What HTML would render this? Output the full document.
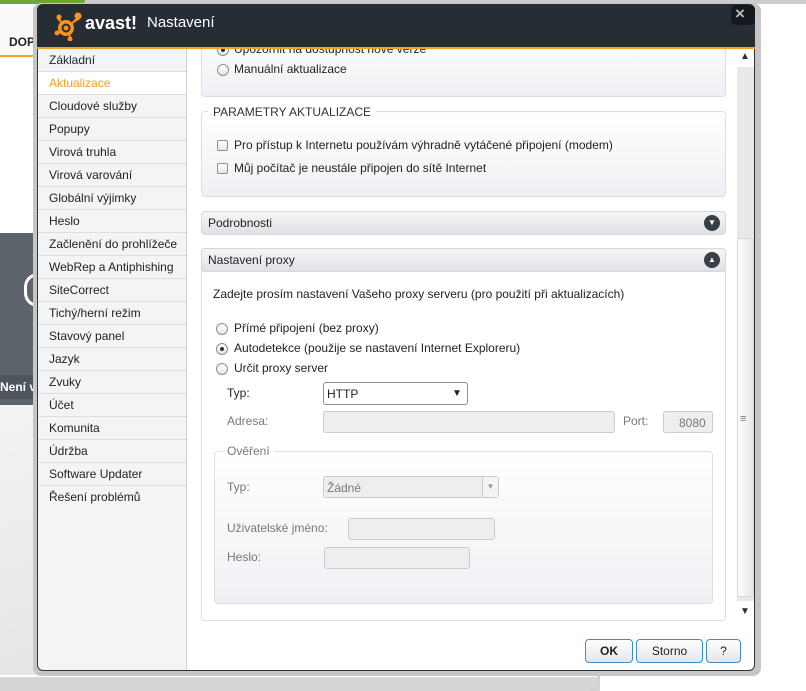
<!DOCTYPE html>
<html><head><meta charset="utf-8">
<style>
*{box-sizing:border-box;margin:0;padding:0}
body{width:806px;height:691px;overflow:hidden;background:#fff;font-family:"Liberation Sans",sans-serif;font-size:12px;color:#222;position:relative}
.abs{position:absolute}
.side div{height:23px;line-height:22px;padding-left:11px;border-bottom:1px solid #dcdee1;font-size:12px;color:#222}
.panel{position:absolute;left:201px;width:525px;border:1px solid #dcdee1;border-radius:4px;background:linear-gradient(#fff,#eef0f3)}
.rad{position:absolute;width:12px;height:12px;border:1px solid #8a8f96;border-radius:50%;background:linear-gradient(#fff,#e4e6e9)}
.rad.on::after{content:"";position:absolute;left:3px;top:3px;width:4px;height:4px;border-radius:50%;background:#333}
.chk{position:absolute;width:11px;height:11px;border:1px solid #8a8f96;border-radius:2px;background:linear-gradient(#fff,#e4e6e9)}
.t{position:absolute;white-space:nowrap;font-size:12px}
.hdr{position:absolute;left:201px;width:525px;height:24px;border-radius:4px;background:linear-gradient(#f5f6f7,#dfe1e4);border:1px solid #d6d8db;line-height:22px;padding-left:6px;font-size:12px}
.hdr .ic{position:absolute;right:5px;top:3px;width:16px;height:16px;border-radius:50%;background:#3a3f45;color:#fff;font-size:8px;line-height:16px;text-align:center}
.inp{position:absolute;height:22px;border:1px solid #c9cbce;border-radius:3px;background:#eeeeee}
.gray{color:#777}
.btn{position:absolute;top:639px;height:24px;border:1px solid #3b8fc4;border-radius:4px;background:linear-gradient(#fff,#e3e6ea);text-align:center;line-height:22px;font-size:12px}
</style></head><body>
<!-- background app -->
<div class="abs" style="left:0;top:0;width:806px;height:4px;background:#ccc"></div>
<div class="abs" style="left:0;top:0;width:85px;height:5px;background:#6fa534;border-radius:0 0 6px 0"></div>
<div class="abs" style="left:0;top:4px;width:40px;height:52px;background:#fafafa"></div>
<div class="t" style="left:9px;top:35px;font-weight:bold;font-size:12px">DOPO</div>
<div class="abs" style="left:0;top:55px;width:40px;height:2px;background:#f7a21b"></div>
<div class="abs" style="left:0;top:233px;width:40px;height:172px;background:#5e646b"></div>
<div class="abs" style="left:24px;top:273px;width:14px;height:34px;border:3px solid #fff;border-right:none;border-radius:17px 0 0 17px"></div>
<div class="abs" style="left:0;top:375px;width:40px;height:24px;background:#4f555c"></div>
<div class="t" style="left:0;top:380px;color:#fff;font-weight:bold">Není v</div>
<div class="abs" style="left:27px;top:438px;width:13px;height:30px;background:#a5a8ac;border-radius:15px 0 0 15px"></div>
<div class="t" style="left:27px;top:483px;color:#9aa">Fi</div>
<div class="abs" style="left:0;top:405px;width:40px;height:270px;background:linear-gradient(160deg,#f2f3f4,#e4e6e8)"></div>
<div class="abs" style="left:0;top:677px;width:600px;height:14px;background:#d4d6d8"></div>
<div class="abs" style="left:590px;top:670px;width:10px;height:21px;border:3px solid #cfd1d3;border-top:none;border-left:none;border-radius:0 0 5px 0"></div>

<!-- dialog frame -->
<div class="abs" style="left:33px;top:3px;width:728px;height:673px;background:#c6c6c6;border-radius:8px"></div>
<div class="abs" style="left:37px;top:4px;width:718px;height:667px;background:#fff;border:1px solid #333;border-radius:6px;overflow:hidden"></div>

<!-- sidebar -->
<div class="abs side" style="left:38px;top:49px;width:149px;height:621px;background:#f3f4f6;border-right:1px solid #d0d2d5;border-radius:0 0 0 6px">
<div>Základní</div><div style="background:#fff;color:#f7a21b">Aktualizace</div><div>Cloudové služby</div><div>Popupy</div><div>Virová truhla</div><div>Virová varování</div><div>Globální výjimky</div><div>Heslo</div><div>Začlenění do prohlížeče</div><div>WebRep a Antiphishing</div><div>SiteCorrect</div><div>Tichý/herní režim</div><div>Stavový panel</div><div>Jazyk</div><div>Zvuky</div><div>Účet</div><div>Komunita</div><div>Údržba</div><div>Software Updater</div><div style="border:none">Řešení problémů</div>
</div>

<!-- content -->
<div class="panel" style="top:30px;height:67px"></div>
<div class="rad on" style="left:217px;top:44px"></div>
<div class="t" style="left:234px;top:42px">Upozornit na dostupnost nové verze</div>
<div class="rad" style="left:217px;top:64px"></div>
<div class="t" style="left:234px;top:62px">Manuální aktualizace</div>

<div class="panel" style="top:111px;height:86px"></div>
<div class="t" style="left:208px;top:105px;background:#fff;padding:0 5px 0 5px;color:#333">PARAMETRY AKTUALIZACE</div>
<div class="chk" style="left:217px;top:140px"></div>
<div class="t" style="left:234px;top:138px">Pro přístup k Internetu používám výhradně vytáčené připojení (modem)</div>
<div class="chk" style="left:217px;top:163px"></div>
<div class="t" style="left:234px;top:161px">Můj počítač je neustále připojen do sítě Internet</div>

<div class="hdr" style="top:211px">Podrobnosti<div class="ic">▼</div></div>

<div class="abs" style="left:201px;top:248px;width:525px;height:373px;border:1px solid #dcdee1;border-radius:4px;background:#fff"></div>
<div class="hdr" style="top:248px">Nastavení proxy<div class="ic">▲</div></div>
<div class="t" style="left:213px;top:287px">Zadejte prosím nastavení Vašeho proxy serveru (pro použití při aktualizacích)</div>
<div class="rad" style="left:216px;top:323px"></div>
<div class="t" style="left:234px;top:321px">Přímé připojení (bez proxy)</div>
<div class="rad on" style="left:216px;top:343px"></div>
<div class="t" style="left:234px;top:341px">Autodetekce (použije se nastavení Internet Exploreru)</div>
<div class="rad" style="left:216px;top:363px"></div>
<div class="t" style="left:234px;top:361px">Určit proxy server</div>
<div class="t" style="left:227px;top:386px">Typ:</div>
<div class="abs" style="left:323px;top:382px;width:145px;height:23px;border:1px solid #8a8f96;border-radius:3px;background:#fff"></div>
<div class="t" style="left:327px;top:387px">HTTP</div>
<div class="t" style="left:452px;top:388px;font-size:10px">▼</div>
<div class="t gray" style="left:227px;top:414px">Adresa:</div>
<div class="inp" style="left:323px;top:411px;width:292px"></div>
<div class="t gray" style="left:623px;top:414px">Port:</div>
<div class="inp" style="left:663px;top:411px;width:50px"></div>
<div class="t gray" style="left:679px;top:416px">8080</div>

<div class="abs" style="left:214px;top:451px;width:499px;height:153px;border:1px solid #dcdee1;border-radius:4px;background:linear-gradient(#fff,#eef0f3)"></div>
<div class="t gray" style="left:223px;top:444px;background:#fff;padding:0 4px">Ověření</div>
<div class="t gray" style="left:227px;top:480px">Typ:</div>
<div class="inp" style="left:323px;top:476px;width:176px"></div>
<div class="t gray" style="left:327px;top:481px">Žádné</div>
<div class="abs" style="left:482px;top:477px;width:16px;height:20px;border-left:1px solid #c9cbce;background:#f4f4f4;color:#999;font-size:8px;text-align:center;line-height:20px">▼</div>
<div class="t gray" style="left:227px;top:521px">Uživatelské jméno:</div>
<div class="inp" style="left:348px;top:518px;width:147px"></div>
<div class="t gray" style="left:227px;top:550px">Heslo:</div>
<div class="inp" style="left:324px;top:547px;width:146px"></div>

<!-- scrollbar -->
<div class="abs" style="left:737px;top:49px;width:17px;height:572px;background:#fff"></div>
<div class="t" style="left:740px;top:51px;font-size:10px;color:#262d35">▲</div>
<div class="abs" style="left:737px;top:67px;width:17px;height:534px;background:#e8e9eb"></div>
<div class="abs" style="left:737px;top:238px;width:17px;height:359px;background:linear-gradient(90deg,#fdfdfd,#e4e6e8);border:1px solid #d5d7da;border-radius:3px"></div>
<div class="t" style="left:740px;top:413px;font-size:11px;color:#777">≡</div>
<div class="t" style="left:740px;top:606px;font-size:10px;color:#262d35">▼</div>

<div class="btn" style="left:585px;width:48px;font-weight:bold">OK</div>
<div class="btn" style="left:636px;width:67px">Storno</div>
<div class="btn" style="left:706px;width:35px">?</div>

<!-- header on top -->
<div class="abs" style="left:37px;top:4px;width:718px;height:43px;background:#262d35;border-radius:6px 6px 0 0"></div>
<div class="abs" style="left:37px;top:47px;width:718px;height:2px;background:#f7a21b"></div>
<div class="abs" style="left:731px;top:5px;width:24px;height:20px;background:#15191e;border-radius:5px"></div>
<div class="t" style="left:735px;top:4px;color:#b8bcc0;font-size:17px;font-weight:bold">×</div>
<svg class="abs" style="left:54px;top:11px" width="30" height="30" viewBox="0 0 30 30">
<g fill="#f7931e"><circle cx="12" cy="17" r="8"/><circle cx="24" cy="5" r="3.5"/><circle cx="5" cy="6" r="2.5"/><circle cx="3" cy="22" r="2.5"/><circle cx="16" cy="28" r="2.5"/>
<path d="M12 17 L24 5 L26 8 Z M12 17 L5 6 L3 8 Z M12 17 L3 22 L4 24 Z M12 17 L16 28 L18 27 Z"/></g>
<circle cx="12" cy="17" r="3.5" fill="none" stroke="#262d35" stroke-width="2"/></svg>
<div class="t" style="left:85px;top:13px;color:#fff;font-size:18px;font-weight:bold;letter-spacing:0px">avast!</div>
<div class="t" style="left:147px;top:14px;color:#fff;font-size:15px">Nastavení</div>
</body></html>
